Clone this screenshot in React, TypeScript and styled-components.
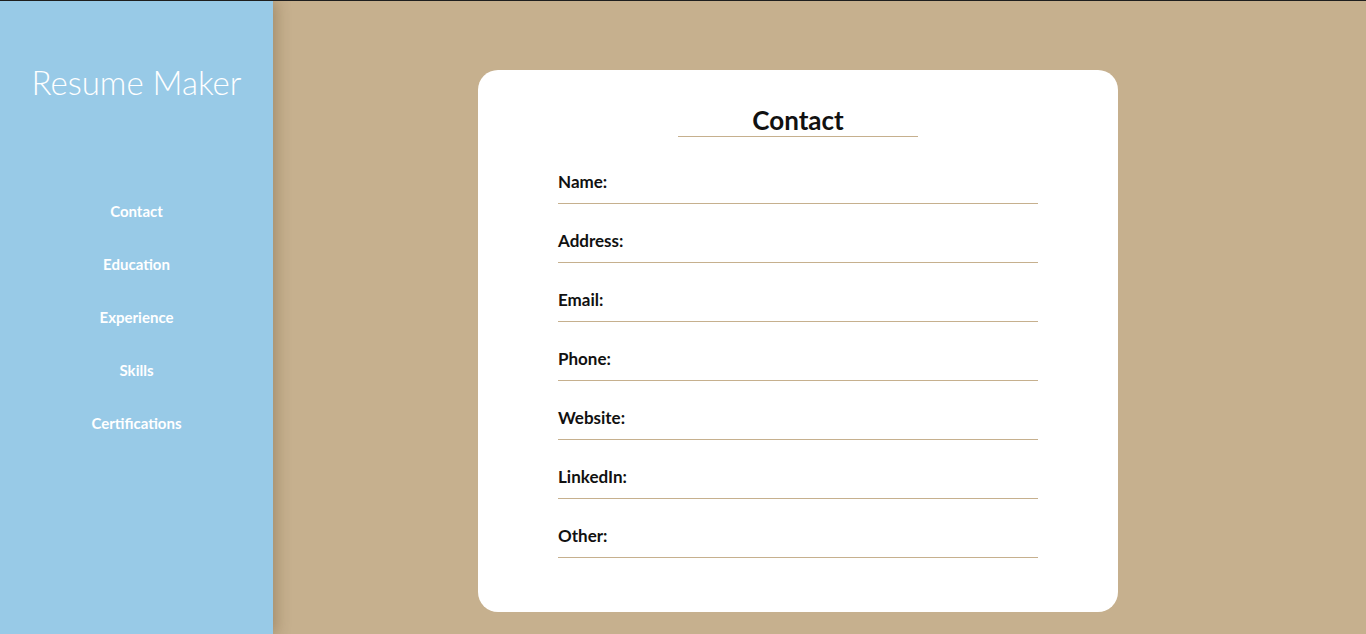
import styled, { createGlobalStyle } from 'styled-components';

const GlobalStyle = createGlobalStyle`
  html, body {
    margin: 0;
    padding: 0;
    height: 100%;
  }

  body {
    font-family: 'Lato', 'Noto Sans', sans-serif;
    background: #c6b08e;
  }
`;

const Page = styled.div`
  display: flex;
  height: 634px;
  border-top: 1px solid #1e1e1e;
  box-sizing: border-box;
  background: #c6b08e;
  overflow: hidden;
`;

const Sidebar = styled.aside`
  position: relative;
  z-index: 1;
  flex: 0 0 273px;
  display: flex;
  flex-direction: column;
  align-items: center;
  background: #98cae7;
  box-shadow: 3px 0 14px rgba(60, 40, 10, 0.28);
`;

const Brand = styled.h1`
  margin: 59px 0 0;
  font-size: 33px;
  font-weight: 300;
  line-height: 44px;
  color: #ffffff;
  white-space: nowrap;
`;

const Nav = styled.nav`
  display: flex;
  flex-direction: column;
  align-items: center;
  margin-top: 80px;
`;

const NavLink = styled.a`
  display: flex;
  align-items: center;
  height: 53px;
  font-size: 15px;
  font-weight: 700;
  color: #ffffff;
  text-decoration: none;
  cursor: pointer;
`;

const Main = styled.main`
  flex: 1;
  display: flex;
  align-items: flex-start;
  padding: 69px 0 0 205px;
`;

const Card = styled.section`
  width: 640px;
  box-sizing: border-box;
  padding: 34px 80px 54px;
  background: #ffffff;
  border-radius: 20px;
`;

const Title = styled.h2`
  width: 240px;
  margin: 0 auto;
  font-size: 26px;
  font-weight: 700;
  line-height: 32px;
  text-align: center;
  color: #111111;
  border-bottom: 1px solid #c6b08e;
`;

const Form = styled.form`
  display: flex;
  flex-direction: column;
  margin-top: 8px;
`;

const Field = styled.label`
  display: flex;
  align-items: flex-end;
  gap: 6px;
  height: 59px;
  box-sizing: border-box;
  padding-bottom: 11px;
  border-bottom: 1px solid #c6b08e;
`;

const FieldName = styled.span`
  font-size: 17px;
  font-weight: 700;
  line-height: 20px;
  color: #111111;
`;

const Input = styled.input`
  flex: 1;
  min-width: 0;
  height: 20px;
  padding: 0;
  border: none;
  outline: none;
  background: transparent;
  font: inherit;
  font-size: 16px;
`;

const sections = ['Contact', 'Education', 'Experience', 'Skills', 'Certifications'];
const fields = ['Name', 'Address', 'Email', 'Phone', 'Website', 'LinkedIn', 'Other'];

const App = () => {
  return (
    <>
      <GlobalStyle />
      <Page>
        <Sidebar>
          <Brand>Resume Maker</Brand>
          <Nav>
            {sections.map((s) => (
              <NavLink key={s}>{s}</NavLink>
            ))}
          </Nav>
        </Sidebar>
        <Main>
          <Card>
            <Title>Contact</Title>
            <Form>
              {fields.map((f) => (
                <Field key={f}>
                  <FieldName>{f}:</FieldName>
                  <Input type="text" />
                </Field>
              ))}
            </Form>
          </Card>
        </Main>
      </Page>
    </>
  );
};

export default App;
